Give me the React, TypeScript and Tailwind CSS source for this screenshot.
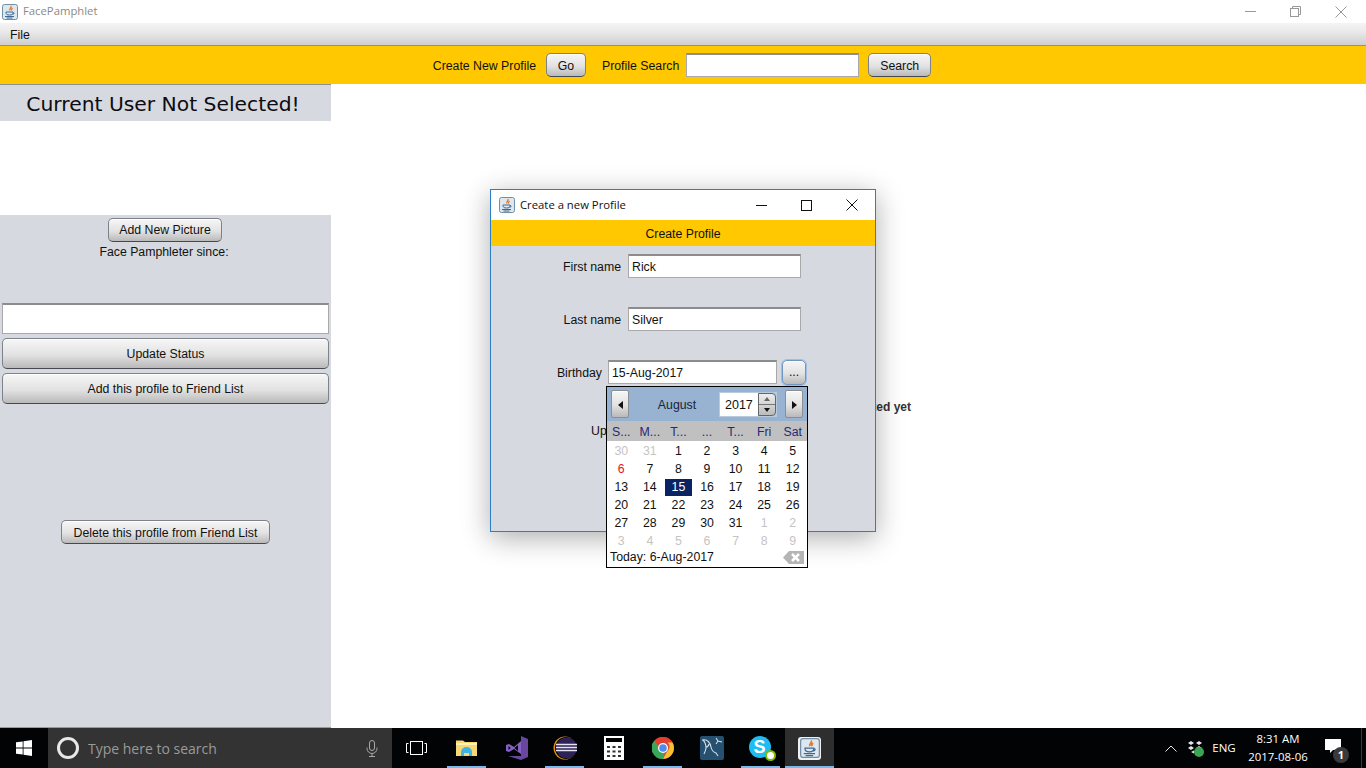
import React from 'react';

const sans = 'font-["Liberation_Sans",Arial,sans-serif]';
const segoe = 'font-["Open_Sans","Noto_Sans",sans-serif]';
const btn =
  'flex items-center justify-center rounded-[5px] border border-[#7d8288] border-b-[#45494f] bg-[linear-gradient(#f6f6f6,#e2e2e2_55%,#b9b9b9)] pt-px text-[12.3px] text-[#111] shadow-[inset_0_1px_0_#fff]';
const field = 'border border-[#a9a9a9] border-t-2 border-t-[#8c8c8c] bg-white text-[12.3px] text-[#111]';

const JavaIcon = ({ size = 16 }: { size?: number }) => (
  <svg width={size} height={size} viewBox="0 0 16 16">
    <rect x="0.5" y="0.5" width="15" height="15" rx="2" fill="#dfe7ee" stroke="#6f8fa8" />
    <path d="M9 2c1 1.500-2 2.500-1 4.500M10.500 4c-1 .8-1.500 1.500-.8 2.500" fill="none" stroke="#e5761f" strokeWidth="1.300" />
    <path d="M4 8h7v.8c0 1.500-1 2.200-3.500 2.200S4 10.300 4 8.800zM11 8.500c1.500 0 1.500 1.800-.5 2" fill="none" stroke="#3d6b94" strokeWidth="1" />
    <path d="M3 12.500h9M4.500 14h6" stroke="#3d6b94" strokeWidth="1" />
  </svg>
);

const TitleButtons = ({ color, restore }: { color: string; restore?: boolean }) => (
  <div className="flex items-center gap-[34px]">
    <svg width="11" height="11" viewBox="0 0 11 11"><path d="M0 5.500h11" stroke={color} /></svg>
    {restore ? (
      <svg width="11" height="11" viewBox="0 0 11 11" fill="none" stroke={color}>
        <rect x="0.500" y="2.500" width="8" height="8" />
        <path d="M2.500 2.500v-2h8v8h-2" />
      </svg>
    ) : (
      <svg width="11" height="11" viewBox="0 0 11 11"><rect x="0.500" y="0.500" width="10" height="10" fill="none" stroke={color} /></svg>
    )}
    <svg width="12" height="12" viewBox="0 0 12 12"><path d="M.5.500l11 11M11.500.500l-11 11" stroke={color} /></svg>
  </div>
);

const Arrow = ({ dir }: { dir: 'left' | 'right' }) => (
  <svg width="5" height="8" viewBox="0 0 5 8">
    <path d={dir === 'left' ? 'M5 0v8L0 4z' : 'M0 0v8l5-4z'} fill="#111" />
  </svg>
);

const weeks: [string, string][][] = [
  [['30', 'o'], ['31', 'o'], ['1', ''], ['2', ''], ['3', ''], ['4', ''], ['5', '']],
  [['6', 'r'], ['7', ''], ['8', ''], ['9', ''], ['10', ''], ['11', ''], ['12', '']],
  [['13', ''], ['14', ''], ['15', 's'], ['16', ''], ['17', ''], ['18', ''], ['19', '']],
  [['20', ''], ['21', ''], ['22', ''], ['23', ''], ['24', ''], ['25', ''], ['26', '']],
  [['27', ''], ['28', ''], ['29', ''], ['30', ''], ['31', ''], ['1', 'o'], ['2', 'o']],
  [['3', 'o'], ['4', 'o'], ['5', 'o'], ['6', 'o'], ['7', 'o'], ['8', 'o'], ['9', 'o']],
];

const dayClass = (kind: string) => {
  if (kind === 'o') return 'text-[#c4c4c4]';
  if (kind === 'r') return 'text-[#e8121a]';
  if (kind === 's') return 'bg-[#0a2463] text-white mx-px';
  return 'text-[#111]';
};

const Calendar = () => (
  <div className={`absolute left-[606px] top-[386px] z-20 h-[182px] w-[202px] border border-black bg-white ${sans}`}>
    <div className="flex h-[34px] items-center bg-[#97b3d1] pl-1 pr-1">
      <div className={`${btn} !rounded-[2px] !border-[#8a8f96] h-[28px] w-[18px]`}><Arrow dir="left" /></div>
      <div className="w-[90px] pl-[6px] pt-[2px] text-center text-[12.3px] text-[#1a2238]">August</div>
      <div className="flex h-[25px] w-[58px] items-stretch bg-[#b9cadd] p-px">
        <div className="flex-1 bg-white pl-[5px] pt-[3px] text-[12.5px] text-[#111]">2017</div>
        <div className="flex w-[18px] flex-col rounded-r-[4px] border border-[#5f6670] bg-[linear-gradient(#eee,#bbb)]">
          <div className="flex flex-1 items-center justify-center border-b border-[#777]">
            <div className="h-0 w-0 border-x-[3px] border-b-[4px] border-x-transparent border-b-[#666]" />
          </div>
          <div className="flex flex-1 items-center justify-center">
            <div className="h-0 w-0 border-x-[3px] border-t-[4px] border-x-transparent border-t-[#111]" />
          </div>
        </div>
      </div>
      <div className={`${btn} !rounded-[2px] !border-[#8a8f96] ml-2 h-[28px] w-[18px]`}><Arrow dir="right" /></div>
    </div>
    <div className="grid h-5 grid-cols-7 items-center bg-[#c0c0c0] pt-[2px] text-center text-[12.3px] text-[#1f2a78]">
      {['S...', 'M...', 'T...', '...', 'T...', 'Fri', 'Sat'].map((d, i) => (
        <span key={i}>{d}</span>
      ))}
    </div>
    <div className="grid grid-cols-7 pt-px text-center text-[12.3px]">
      {weeks.flat().map(([d, kind], i) => (
        <div key={i} className="flex h-[18px] items-center justify-center">
          <span className={`flex h-[17px] w-full items-center justify-center ${dayClass(kind)}`}>{d}</span>
        </div>
      ))}
    </div>
    <div className="flex h-[14px] items-center justify-between px-[3px] text-[12.3px] text-[#111]">
      <span>Today: 6-Aug-2017</span>
      <svg width="21" height="13" viewBox="0 0 21 13">
        <path d="M6 0h15v13H6L0 6.500z" fill="#b5b5b5" />
        <path d="M9 3l7 7M16 3l-7 7" stroke="#fff" strokeWidth="2.500" />
      </svg>
    </div>
  </div>
);

const Dialog = () => (
  <div className={`absolute left-[490px] top-[189px] z-10 h-[343px] w-[386px] border border-[#2b7fc9] bg-[#d6d9df] shadow-[0_6px_26px_rgba(0,0,0,0.32)] ${sans}`}>
    <div className={`flex h-[30px] items-center bg-white pl-2 pr-[17px] ${segoe}`}>
      <JavaIcon />
      <span className="ml-[5px] flex-1 text-[11.3px] text-[#111]">Create a new Profile</span>
      <TitleButtons color="#111" />
    </div>
    <div className="flex h-[26px] items-center justify-center bg-[#ffc800] pt-[2px] text-[12.3px] text-[#111]">Create Profile</div>
    <div className="mt-2 flex h-6 items-center">
      <span className="w-[130px] pt-[2px] text-right text-[12.3px] text-[#111]">First name</span>
      <div className={`${field} ml-[7px] flex h-6 w-[173px] items-center pl-[3px] pt-px`}>Rick</div>
    </div>
    <div className="mt-[29px] flex h-6 items-center">
      <span className="w-[130px] pt-[2px] text-right text-[12.3px] text-[#111]">Last name</span>
      <div className={`${field} ml-[7px] flex h-6 w-[173px] items-center pl-[3px] pt-px`}>Silver</div>
    </div>
    <div className="mt-[29px] flex h-6 items-center">
      <span className="w-[111px] pt-[2px] text-right text-[12.3px] text-[#111]">Birthday</span>
      <div className={`${field} ml-[6px] flex h-6 w-[169px] items-center pl-[3px] pt-px`}>15-Aug-2017</div>
      <div className={`${btn} ml-[5px] h-[25px] w-[24px] !border-[#6f97c4] ring-1 ring-[#9fbfe0]`}>...</div>
    </div>
    <div className="ml-[100px] mt-[38px] text-[12.3px] text-[#111]">Up</div>
  </div>
);

const Sidebar = () => (
  <aside className={`flex w-[331px] flex-col ${sans}`}>
    <div className="flex h-[37px] items-center justify-center border-t border-[#8e8f8f] bg-[#d6d9df] pr-[5px] pt-[3px] font-['DejaVu_Sans',sans-serif] text-[20.3px] text-[#0c0c12]">
      Current User Not Selected!
    </div>
    <div className="h-[94px] bg-white" />
    <div className="flex flex-1 flex-col items-center border-b border-[#9a9a9a] bg-[#d6d9df]">
      <div className={`${btn} ml-[108px] mt-[3px] h-[24px] w-[114px] self-start`}>Add New Picture</div>
      <div className="mt-[3px] pr-[3px] text-[12.3px] leading-[15px] text-[#111]">Face Pamphleter since:</div>
      <div className={`${field} mt-[43px] h-[31px] w-[327px]`} />
      <div className={`${btn} mt-1 h-[31px] w-[327px]`}>Update Status</div>
      <div className={`${btn} mt-1 h-[31px] w-[327px]`}>Add this profile to Friend List</div>
      <div className={`${btn} !pt-[2px] mt-[116px] h-[24px] w-[209px]`}>Delete this profile from Friend List</div>
    </div>
  </aside>
);

const TaskCell = ({ children, open, active }: { children: React.ReactNode; open?: boolean; active?: boolean }) => (
  <div className={`relative flex h-10 w-[49px] items-center justify-center ${active ? 'bg-[#2e2e2e]' : ''}`}>
    {children}
    {open && <div className={`absolute bottom-0 h-[2px] bg-[#76b9ed] ${active ? 'inset-x-0' : 'inset-x-[5px]'}`} />}
  </div>
);

const Taskbar = () => (
  <footer className={`flex h-10 shrink-0 items-center bg-[#020304] ${segoe}`}>
    <div className="flex h-10 w-12 items-center justify-center">
      <svg width="16" height="16" viewBox="0 0 16 16" fill="#fff">
        <path d="M0 2.300l6.700-.9v6.200H0zM7.500 1.300L16 0v7.600H7.500zM0 8.400h6.700v6.200L0 13.700zM7.500 8.400H16V16l-8.500-1.200z" />
      </svg>
    </div>
    <div className="flex h-10 w-[344px] items-center bg-[#333333] pl-[9px]">
      <div className="h-[22px] w-[22px] rounded-full border-[3px] border-[#e8e8e8]" />
      <span className="ml-[9px] flex-1 pt-px text-[14px] text-[#9a9a9a]">Type here to search</span>
      <svg className="mr-[14px]" width="12" height="17" viewBox="0 0 12 17" fill="none" stroke="#a8a8a8">
        <rect x="3.500" y="0.500" width="5" height="10" rx="2.500" />
        <path d="M1 7.500v1a5 5 0 0 0 10 0v-1M6 13.500v3M3 16.500h6" />
      </svg>
    </div>
    <div className="flex h-10 w-[50px] items-center justify-center pr-[2px]">
      <svg width="21" height="14" viewBox="0 0 21 14" fill="none" stroke="#fff">
        <rect x="4.500" y="0.500" width="12" height="13" />
        <path d="M2.500 2.500H.5v9h2M18.500 2.500h2v9h-2" />
      </svg>
    </div>
    <TaskCell open>
      <svg width="21" height="18" viewBox="0 0 21 18">
        <path d="M0 3V1.500h7l2 1.500h12v14H0z" fill="#f8d775" />
        <path d="M0 4h21v2H0z" fill="#fff1b8" />
        <path d="M5 17v-4a5.500 5 0 0 1 11 0v4h-3v-3H8v3z" fill="#3db4e8" />
      </svg>
    </TaskCell>
    <TaskCell>
      <svg width="24" height="24" viewBox="0 0 24 24">
        <path d="M17 0l7 3v18l-7 3L4 20h13z" fill="#68489e" />
        <path d="M17 5v13l-7-5-5 3-3-1V9l3-1 5 3z" fill="#8661c5" />
        <path d="M4.500 10v4l2.200-2zM14 9l-3.500 3 3.500 3z" fill="#020304" />
      </svg>
    </TaskCell>
    <TaskCell open>
      <svg width="24" height="24" viewBox="0 0 24 24">
        <circle cx="12" cy="12" r="11.500" fill="#e38f17" />
        <circle cx="13" cy="12" r="11" fill="#020304" />
        <circle cx="13.500" cy="12" r="10.500" fill="#2c2255" />
        <path d="M3 8.500h21M3 11.500h21M3 14.500h21" stroke="#e6e3f2" strokeWidth="1.300" />
      </svg>
    </TaskCell>
    <TaskCell>
      <svg width="20" height="24" viewBox="0 0 20 24">
        <path d="M0 0h20v24H0z" fill="#fff" />
        <path d="M2 2h16v4H2z" fill="#020304" />
        <path d="M3 10h3v2H3zM8.500 10h3v2h-3zM14 10h3v2h-3zM3 14.500h3v2H3zM8.500 14.500h3v2h-3zM14 14.500h3v2h-3zM3 19h3v2H3zM8.500 19h3v2h-3zM14 19h3v2h-3z" fill="#333" />
      </svg>
    </TaskCell>
    <TaskCell open>
      <svg width="22" height="22" viewBox="0 0 22 22">
        <circle cx="11" cy="11" r="11" fill="#dd4b39" />
        <path d="M11 0a11 11 0 0 1 9.500 5.500H11a5.500 5.500 0 0 0-5 3L2.500 3.500A11 11 0 0 1 11 0z" fill="#e53e2f" />
        <path d="M20.500 5.500A11 11 0 0 1 11 22l4.700-8.200a5.500 5.500 0 0 0 0-8.300z" fill="#fbc02d" />
        <path d="M11 22A11 11 0 0 1 2.500 3.500L7 11.500a5 5 0 0 0 6 3.800L11 22z" fill="#3ba657" />
        <circle cx="11" cy="11" r="5" fill="#fff" />
        <circle cx="11" cy="11" r="3.800" fill="#4d8bf0" />
      </svg>
    </TaskCell>
    <TaskCell>
      <svg width="24" height="24" viewBox="0 0 24 24" fill="none">
        <rect width="24" height="24" rx="2" fill="#25506f" />
        <path d="M2 4c5-1 8 2 9 7 .6 3 2 5 5 6l2 3M3 4c2 2 3 5 3 8-.2 2-1 4-2 6M9 8c-.5 2-1.500 3-3 3M16 2l2 3 4 1M18 5l-2 3" stroke="#d5dde5" strokeWidth="1.100" />
      </svg>
    </TaskCell>
    <TaskCell open>
      <div className="relative h-6 w-6">
        <div className="flex h-[22px] w-[22px] items-center justify-center rounded-full bg-[#1ebcf2] font-['Liberation_Sans',sans-serif] text-[18px] font-bold leading-none text-white">S</div>
        <div className="absolute bottom-[-1px] right-[-3px] h-[11px] w-[11px] rounded-full border-2 border-[#7fba00] bg-white" />
      </div>
    </TaskCell>
    <TaskCell open active>
      <div className="flex h-[23px] w-[23px] items-center justify-center rounded-[3px] bg-[#eef0f2]">
        <JavaIcon size={20} />
      </div>
    </TaskCell>

    <div className="ml-auto flex h-10 items-center text-white">
      <svg className="mr-[10px]" width="12" height="7" viewBox="0 0 12 7" fill="none" stroke="#e8e8e8">
        <path d="M.5 6.500L6 1l5.500 5.500" />
      </svg>
      <div className="relative h-[16px] w-[16px]">
        <svg width="16" height="16" viewBox="0 0 16 16" fill="#e8e8e8">
          <path d="M1 3l3-2 3 2-3 2zM9 3l3-2 3 2-3 2zM1 8l3-2 3 2-3 2zM9 8l3-2 3 2-3 2zM4 12l3-1.500v3L4 12z" />
        </svg>
        <div className="absolute bottom-[-1px] right-[-1px] h-[10px] w-[10px] rounded-full bg-[#3aa655]" />
      </div>
      <span className="ml-[4px] w-[34px] text-center text-[11.5px]">ENG</span>
      <div className="ml-[2px] flex w-[70px] flex-col items-center text-[11.4px] leading-[18px]">
        <span>8:31 AM</span>
        <span>2017-08-06</span>
      </div>
      <div className="relative ml-[12px] mr-[18px] h-[18px] w-[18px]">
        <svg width="16" height="15" viewBox="0 0 16 15" fill="#fff">
          <path d="M0 0h16v11h-8l-3 3v-3H0z" />
        </svg>
        <div className="absolute bottom-[-6px] right-[-6px] flex h-[16px] w-[16px] items-center justify-center rounded-full bg-[#3a3a3a] text-[11px] font-bold">1</div>
      </div>
      <div className="mr-[4px] h-10 w-px bg-[#3a3a3a]" />
    </div>
  </footer>
);

export default function App() {
  return (
    <div className={`relative flex h-[768px] w-[1366px] flex-col overflow-hidden bg-white ${sans}`}>
      <div className={`flex h-[23px] shrink-0 items-center pl-[2px] pr-[19px] ${segoe}`}>
        <JavaIcon />
        <span className="ml-[5px] flex-1 text-[11.3px] text-[#8a8a8a]">FacePamphlet</span>
        <TitleButtons color="#999" restore />
      </div>
      <div className="flex h-[23px] shrink-0 items-center border-b border-[#8e8f8f] bg-[linear-gradient(#f4f4f4,#ebebeb_35%,#cfcfcf)] pl-[10px] pt-[2px] text-[12.3px] text-[#111]">
        File
      </div>
      <div className="flex h-[38px] shrink-0 items-center justify-center bg-[#ffc800] pr-[2px] text-[12.3px] text-[#111]">
        <span className="pt-[2px]">Create New Profile</span>
        <div className={`${btn} !pt-[2px] ml-[10px] h-[24px] w-[40px]`}>Go</div>
        <span className="ml-4 pt-[2px]">Profile Search</span>
        <div className={`${field} ml-[7px] h-[24px] w-[173px]`} />
        <div className={`${btn} !pt-[2px] ml-[9px] h-[24px] w-[63px]`}>Search</div>
      </div>
      <div className="flex min-h-0 flex-1">
        <Sidebar />
        <main className="flex-1 pt-[314px]">
          <div className="w-[580px] text-right text-[12px] font-bold text-[#333]">No status updated yet</div>
        </main>
      </div>
      <Taskbar />
      <Dialog />
      <Calendar />
    </div>
  );
}
